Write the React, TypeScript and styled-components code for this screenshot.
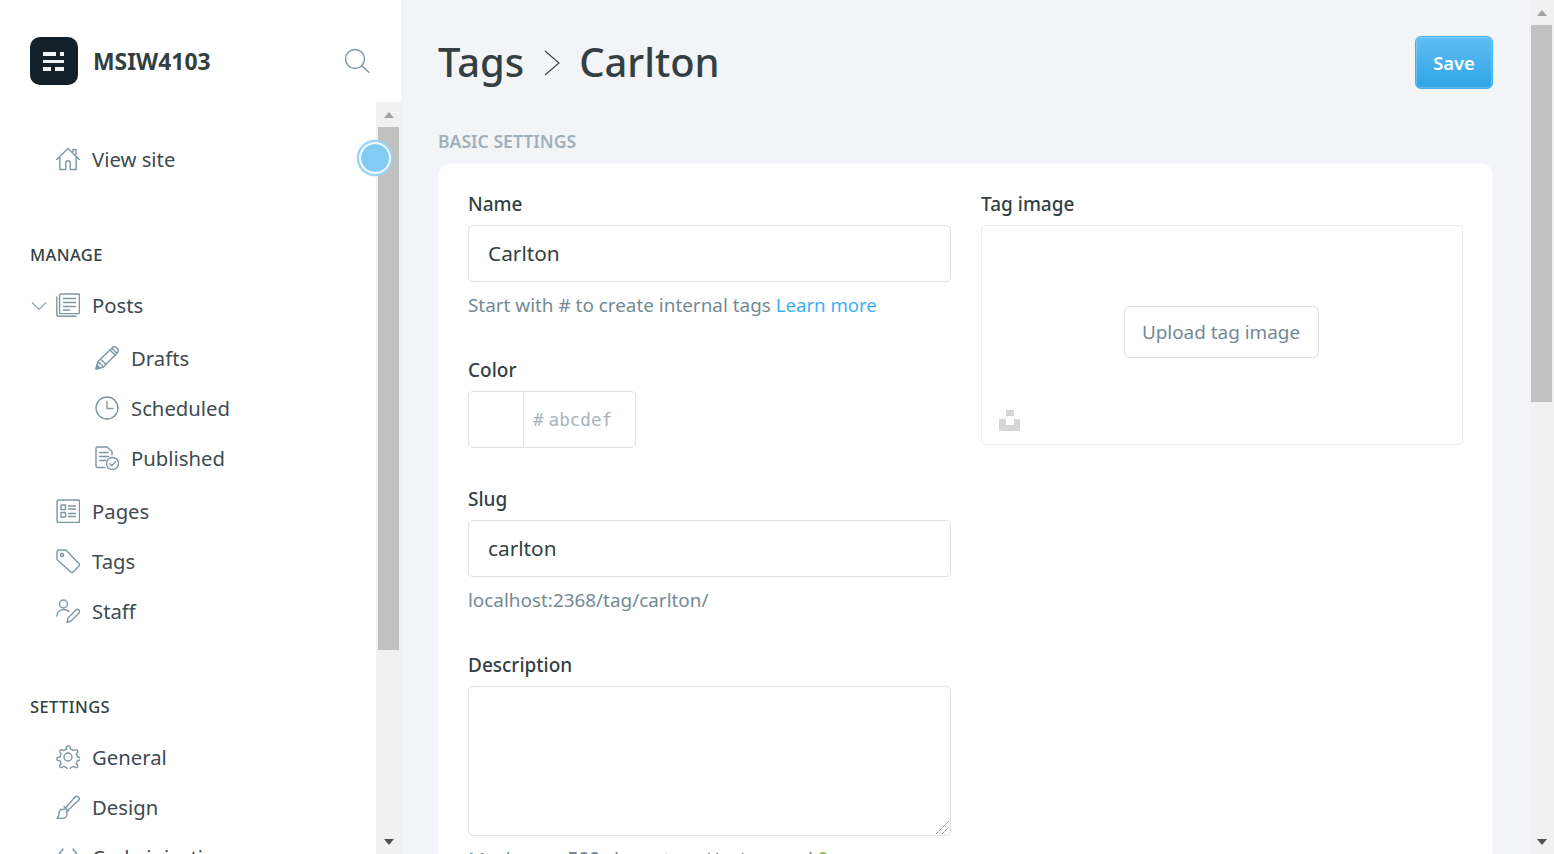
import React from 'react'
import styled, {createGlobalStyle} from 'styled-components'

const GlobalStyle = createGlobalStyle`
  html, body {
    margin: 0;
    height: 100%;
    overflow: hidden;
    background: #f3f4f8;
    font-family: "Noto Sans", "Open Sans", sans-serif;
    color: #343f44;
  }
  * { box-sizing: border-box; }
`

const Page = styled.div`
  display: flex;
  height: 854px;
  overflow: hidden;
`

const Sidebar = styled.aside`
  position: relative;
  display: flex;
  flex-direction: column;
  width: 401px;
  flex: none;
  background: #fff;
`

const SideHead = styled.div`
  display: flex;
  align-items: center;
  height: 102px;
  flex: none;
  padding: 20px 31px 0 30px;
`

const Logo = styled.div`
  display: flex;
  align-items: center;
  justify-content: center;
  width: 48px;
  height: 48px;
  border-radius: 10px;
  background: #15212a;
`

const Brand = styled.div`
  margin-left: 15px;
  flex: 1;
  font-size: 22.9px;
  font-weight: 700;
  color: #343f44;
`

const SideBody = styled.div`
  display: flex;
  flex: 1;
  min-height: 0;
`

const Nav = styled.nav`
  flex: 1;
  padding: 33px 0 0 30px;
  overflow: hidden;
`

const NavGroup = styled.div`
  margin-bottom: 58px;
`

const NavTitle = styled.div`
  height: 24px;
  line-height: 24px;
  margin-bottom: 14px;
  font-size: 16.5px;
  font-weight: 500;
  letter-spacing: 0.4px;
  color: #343f44;
`

const NavRow = styled.div<{$sub?: boolean; $drop?: number}>`
  display: flex;
  align-items: center;
  height: 50px;
  margin-top: ${p => p.$drop ?? 0}px;
  padding-left: ${p => (p.$sub ? 65 : 26)}px;
  padding-bottom: 2px;
  gap: 12px;
  font-size: 20.3px;
  color: #3f4b52;
  svg { flex: none; }
`

const Caret = styled.svg`
  position: absolute;
  left: 31px;
`

const RowWrap = styled.div`
  display: flex;
  align-items: center;
`

const Scrollbar = styled.div`
  display: flex;
  flex-direction: column;
  align-items: center;
  width: 25px;
  flex: none;
  height: 100%;
  background: #f1f1f1;
`

const ScrollEnd = styled.div`
  display: flex;
  align-items: center;
  justify-content: center;
  width: 100%;
  height: 25px;
  flex: none;
`

const ArrowUp = styled.div`
  width: 0;
  height: 0;
  border-left: 5.5px solid transparent;
  border-right: 5.5px solid transparent;
  border-bottom: 6px solid #a3a3a3;
`

const ArrowDown = styled.div`
  width: 0;
  height: 0;
  border-left: 5.5px solid transparent;
  border-right: 5.5px solid transparent;
  border-top: 6px solid #505050;
`

const Thumb = styled.div<{$height: number}>`
  width: 21px;
  height: ${p => p.$height}px;
  flex: none;
  background: #c1c1c1;
`

const ScrollGap = styled.div`
  flex: 1;
`

const Pulse = styled.div`
  position: absolute;
  left: 359px;
  top: 142px;
  width: 32px;
  height: 32px;
  border-radius: 50%;
  background: #82ccf3;
  border: 2px solid #f4f8fa;
  box-shadow: 0 0 0 2px #96d4f5, 0 0 1px 2.5px rgba(150, 212, 245, 0.5);
  background-clip: padding-box;
`

const Main = styled.main`
  flex: 1;
  min-width: 0;
  padding: 0 36px 0 37px;
`

const TopBar = styled.div`
  display: flex;
  align-items: center;
  height: 125px;
`

const Crumbs = styled.h1`
  display: flex;
  align-items: center;
  flex: 1;
  margin: 0;
  padding-bottom: 3px;
  font-size: 39.9px;
  font-weight: 500;
  color: #343f44;
`

const Chevron = styled.svg`
  margin: 4px 19px 0 20px;
`

const SaveButton = styled.button`
  width: 78px;
  height: 53px;
  border: 1px solid #3eb0ef;
  border-radius: 6px;
  background: linear-gradient(#5fbcf2, #2fa5e8);
  box-shadow: inset 0 0 0 1px rgba(255, 255, 255, 0.25);
  color: #fff;
  font-family: inherit;
  font-size: 18.4px;
  font-weight: 600;
`

const SectionTitle = styled.h2`
  height: 38px;
  margin: 0;
  padding-top: 4px;
  font-size: 17.6px;
  line-height: 25px;
  font-weight: 600;
  color: #9fb0ba;
`

const Card = styled.section`
  display: grid;
  grid-template-columns: 483px 482px;
  column-gap: 30px;
  padding: 29px;
  background: #fff;
  border: 1px solid #f9fafb;
  border-radius: 12px;
  height: 900px;
`

const Field = styled.div`
  padding-bottom: 40px;
`

const Label = styled.label`
  display: block;
  height: 22px;
  line-height: 22px;
  margin-bottom: 10px;
  font-size: 19px;
  font-weight: 500;
  color: #343f44;
`

const TextInput = styled.input`
  display: block;
  width: 100%;
  height: 57px;
  padding: 0 19px 2px;
  border: 1px solid #dae3ea;
  border-radius: 5px;
  outline: none;
  background: #fff;
  font-family: inherit;
  font-size: 20.8px;
  color: #343f44;
`

const Hint = styled.p`
  height: 22px;
  line-height: 22px;
  margin: 12px 0 3px;
  font-size: 18.9px;
  color: #738a94;
`

const HintLink = styled.a`
  font-size: 18.6px;
  color: #3eb0ef;
`

const ColorBox = styled.div`
  display: flex;
  width: 168px;
  height: 57px;
  border: 1px solid #dae3ea;
  border-radius: 5px;
`

const Swatch = styled.div`
  width: 55px;
  border-right: 1px solid #dae3ea;
`

const HexText = styled.div`
  display: flex;
  align-items: center;
  gap: 5px;
  padding-left: 9px;
  font-family: "DejaVu Sans Mono", monospace;
  font-size: 17.6px;
  color: #a6b4bb;
`

const AreaWrap = styled.div`
  position: relative;
`

const Area = styled.textarea`
  display: block;
  width: 100%;
  height: 150px;
  border: 1px solid #dae3ea;
  border-radius: 5px;
  outline: none;
  resize: none;
  background: #fff;
`

const Grip = styled.svg`
  position: absolute;
  right: 2px;
  bottom: 2px;
`

const Count = styled.b<{$ok?: boolean}>`
  font-weight: 700;
  color: ${p => (p.$ok ? '#9fbb58' : '#738a94')};
`

const ImageBox = styled.div`
  position: relative;
  display: flex;
  align-items: center;
  justify-content: center;
  height: 220px;
  padding: 0 2px 6px 0;
  border: 1px solid #e8eef2;
  border-radius: 5px;
`

const UploadButton = styled.button`
  width: 195px;
  height: 52px;
  padding-bottom: 1px;
  border: 1px solid #dae3ea;
  border-radius: 6px;
  background: #fff;
  font-family: inherit;
  font-size: 18.9px;
  color: #738a94;
`

const UnsplashMark = styled.svg`
  position: absolute;
  left: 17px;
  bottom: 13px;
`

const ic = {fill: 'none', stroke: '#7d97a4', strokeWidth: 1.4, strokeLinecap: 'round', strokeLinejoin: 'round'} as const

const Icon = ({children}: {children: React.ReactNode}) => (
  <svg width="24" height="24" viewBox="0 0 24 24" {...ic}>
    {children}
  </svg>
)

const HomeIcon = () => (
  <Icon>
    <path d="M.7 12.5 12 1.5l11.3 11M3.8 10v12.5h6v-6.5a2.2 2.2 0 0 1 4.4 0v6.5h6V10M17 4.5V2.5h3v5" />
  </Icon>
)
const PostsIcon = () => (
  <Icon>
    <rect x="3.6" y="1" width="19.8" height="19.6" rx="1" />
    <path d="M.8 4v18a1.2 1.2 0 0 0 1.2 1.2h18M7.5 5.5h12M7.5 9.5h12M7.5 13.5h12M7.5 17h6" />
  </Icon>
)
const PencilIcon = () => (
  <Icon>
    <path d="M1 23 3 15.5 17.5 1.5a2.6 2.6 0 0 1 3.7 0l1.3 1.3a2.6 2.6 0 0 1 0 3.7L8.5 21ZM3 15.5 8.5 21M5.5 13l5.5 5.500M15 4l5.5 5.5M17 2.5l5 5" />
    <path d="m1 23 1-4 3 3Z" fill="#7d97a4" />
  </Icon>
)
const ClockIcon = () => (
  <Icon>
    <circle cx="12" cy="12" r="11" />
    <path d="M12 5.5v7h6" />
  </Icon>
)
const PublishedIcon = () => (
  <Icon>
    <path d="M10 21.5H2.500A1.500 1.500 0 0 1 1 20V2.500A1.500 1.500 0 0 1 2.500 1H12l5 4.500V9" />
    <path d="M4.500 6.500h8.500M4.500 10.500h9M4.500 14.500h6" />
    <circle cx="17.5" cy="17.5" r="6" />
    <path d="m14.800 17.800 2 2 3.800-4.200" />
  </Icon>
)
const PagesIcon = () => (
  <Icon>
    <rect x="1" y="1" width="22.5" height="22.5" rx="1.5" />
    <rect x="5" y="6" width="4.5" height="4.5" />
    <rect x="5" y="13.5" width="4.5" height="4.5" />
    <path d="M12.500 7h7M12.500 10h7M12.500 14.500h7M12.500 17.500h7" />
  </Icon>
)
const TagIcon = () => (
  <Icon>
    <path d="M1 3v7.500L14.500 22.800a2 2 0 0 0 2.800 0l5.500-5.600a2 2 0 0 0 0-2.800L10 1H3a2 2 0 0 0-2 2Z" />
    <circle cx="6" cy="6" r="1.5" />
  </Icon>
)
const StaffIcon = () => (
  <Icon>
    <circle cx="7.5" cy="5" r="4" />
    <path d="M.7 17c.5-4 3.500-6.500 7-6.500 2 0 3.800.8 5 2M11 23.500l1-4.500 8-8a2 2 0 0 1 3 3l-8 8Z" />
  </Icon>
)
const GearIcon = () => (
  <Icon>
    <circle cx="12" cy="12" r="4" />
    <path d="m10.200 1.800.6 2.200c-1 .3-2 .8-2.800 1.500L5.800 4.900a1.600 1.600 0 0 0-1.900 2.300l1.200 1.900c-.5.900-.9 1.900-1 2.900l-2.300.4a1.600 1.600 0 0 0 0 3l2.300.5c.2.900.6 1.800 1.100 2.600l-1.300 1.700a1.600 1.600 0 0 0 2 2.300l2-1.100c.8.500 1.700.9 2.700 1.100l.6 2a1.600 1.600 0 0 0 3 0l.6-2.100c1-.2 1.900-.6 2.700-1.100l2 1.200a1.600 1.600 0 0 0 2-2.300l-1.300-1.800c.5-.8.900-1.700 1.100-2.600l2.100-.5a1.600 1.600 0 0 0 0-3l-2.100-.5c-.2-1-.5-1.900-1-2.700l1.200-2a1.600 1.600 0 0 0-2-2.300l-2.200.7c-.8-.7-1.800-1.200-2.800-1.500l-.6-2.200a1.600 1.600 0 0 0-2.900 0Z" />
  </Icon>
)
const BrushIcon = () => (
  <Icon>
    <path d="M1 23.500h5c3 0 5-2 5-4.500 0-.8-.3-1.600-.7-2.200L22.500 5.500a2.500 2.500 0 0 0-3.600-3.500L8.200 14.600C5 13.500 3 15.500 3 18.500c0 2-1 4-2 5ZM8 11.500l4.500 4.500" />
  </Icon>
)
const CodeIcon = () => (
  <Icon>
    <path d="M7 4 1 12l6 8M17 4l6 8-6 8" />
  </Icon>
)

const App = () => (
  <>
    <GlobalStyle />
    <Page>
      <Sidebar>
        <SideHead>
          <Logo>
            <svg width="22" height="21" viewBox="0 0 22 21" fill="#f1f3f4">
              <rect x="0" y="1" width="13" height="4" />
              <rect x="17" y="1" width="4" height="4" />
              <rect x="0" y="9" width="21" height="3" />
              <rect x="0" y="16" width="8" height="4" />
              <rect x="12" y="16" width="9" height="4" />
            </svg>
          </Logo>
          <Brand>MSIW4103</Brand>
          <svg width="26" height="26" viewBox="0 0 26 26" fill="none" stroke="#7d97a4" strokeWidth="1.4">
            <circle cx="11" cy="11" r="9.5" />
            <path d="m17.800 17.800 7 6.500" strokeLinecap="round" />
          </svg>
        </SideHead>
        <SideBody>
          <Nav>
            <NavGroup>
              <NavRow><HomeIcon />View site</NavRow>
            </NavGroup>
            <NavGroup>
              <NavTitle>MANAGE</NavTitle>
              <RowWrap>
                <Caret width="16" height="10" viewBox="0 0 16 10" fill="none" stroke="#8fa3ae" strokeWidth="1.2">
                  <path d="m1 1.500 7 7 7-7" />
                </Caret>
                <NavRow><PostsIcon />Posts</NavRow>
              </RowWrap>
              <NavRow $sub $drop={3}><PencilIcon />Drafts</NavRow>
              <NavRow $sub><ClockIcon />Scheduled</NavRow>
              <NavRow $sub><PublishedIcon />Published</NavRow>
              <NavRow $drop={3}><PagesIcon />Pages</NavRow>
              <NavRow><TagIcon />Tags</NavRow>
              <NavRow><StaffIcon />Staff</NavRow>
            </NavGroup>
            <NavGroup>
              <NavTitle>SETTINGS</NavTitle>
              <NavRow><GearIcon />General</NavRow>
              <NavRow><BrushIcon />Design</NavRow>
              <NavRow><CodeIcon />Code injection</NavRow>
            </NavGroup>
          </Nav>
          <Scrollbar>
            <ScrollEnd><ArrowUp /></ScrollEnd>
            <Thumb $height={523} />
            <ScrollGap />
            <ScrollEnd><ArrowDown /></ScrollEnd>
          </Scrollbar>
        </SideBody>
        <Pulse />
      </Sidebar>
      <Main>
        <TopBar>
          <Crumbs>
            Tags
            <Chevron width="16" height="26" viewBox="0 0 16 26" fill="none" stroke="#343f44" strokeWidth="1.1">
              <path d="m1 1 14 12L1 25" />
            </Chevron>
            Carlton
          </Crumbs>
          <SaveButton>Save</SaveButton>
        </TopBar>
        <SectionTitle>BASIC SETTINGS</SectionTitle>
        <Card>
          <div>
            <Field>
              <Label>Name</Label>
              <TextInput readOnly value="Carlton" />
              <Hint>Start with # to create internal tags <HintLink>Learn more</HintLink></Hint>
            </Field>
            <Field>
              <Label>Color</Label>
              <ColorBox>
                <Swatch />
                <HexText><span>#</span><span>abcdef</span></HexText>
              </ColorBox>
            </Field>
            <Field>
              <Label>Slug</Label>
              <TextInput readOnly value="carlton" />
              <Hint>localhost:2368/tag/carlton/</Hint>
            </Field>
            <Field>
              <Label>Description</Label>
              <AreaWrap>
                <Area readOnly />
                <Grip width="13" height="13" viewBox="0 0 13 13" fill="none" stroke="#555" strokeDasharray="1 1">
                  <path d="M0 13 13 0M6 13l7-7" />
                </Grip>
              </AreaWrap>
              <Hint>Maximum: <Count>500</Count> characters. You've used <Count $ok>0</Count></Hint>
            </Field>
          </div>
          <div>
            <Label>Tag image</Label>
            <ImageBox>
              <UploadButton>Upload tag image</UploadButton>
              <UnsplashMark width="21" height="21" viewBox="0 0 21 21" fill="#d6d6d6">
                <rect x="7" y="0" width="8" height="6" />
                <path d="M0 9h7v6h8V9h6v12H0Z" />
              </UnsplashMark>
            </ImageBox>
          </div>
        </Card>
      </Main>
      <Scrollbar>
        <ScrollEnd><ArrowUp /></ScrollEnd>
        <Thumb $height={377} />
        <ScrollGap />
        <ScrollEnd><ArrowDown /></ScrollEnd>
      </Scrollbar>
    </Page>
  </>
)

export default App
